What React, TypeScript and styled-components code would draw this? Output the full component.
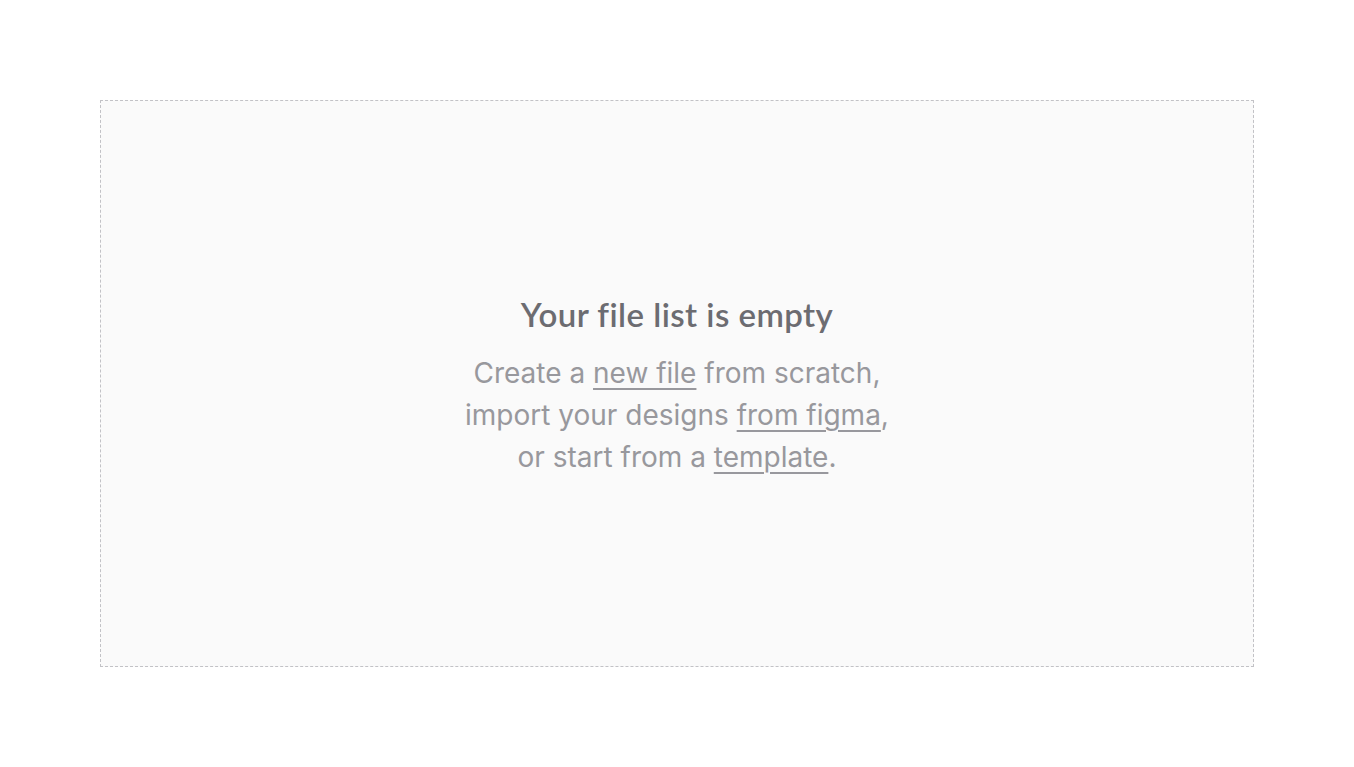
import React from "react";
import styled, { createGlobalStyle } from "styled-components";

const Global = createGlobalStyle`
  html, body { margin: 0; padding: 0; background: #ffffff; }
  body { font-family: Inter, "Liberation Sans", sans-serif; }
`;

const Page = styled.div`
  box-sizing: border-box;
  width: 1354px;
  height: 767px;
  padding: 100px;
  display: flex;
`;

const Dropzone = styled.section`
  box-sizing: border-box;
  flex: 1;
  height: 567px;
  padding-top: 4px;
  background: #fafafa;
  border: 1px dashed #c2c2c6;
  display: flex;
  flex-direction: column;
  align-items: center;
  justify-content: center;
  text-align: center;
`;

const Title = styled.h2`
  margin: 0 0 18px 0;
  font-family: Lato, "Noto Sans", sans-serif;
  font-weight: 600;
  font-size: 33px;
  line-height: 40px;
  color: #6c6c71;
  letter-spacing: 0.45px;
`;

const Body = styled.p`
  margin: 0;
  font-family: Inter, "Liberation Sans", sans-serif;
  font-weight: 400;
  font-size: 28px;
  line-height: 42px;
  color: #98989d;
`;

const Link = styled.a`
  color: inherit;
  text-decoration: underline;
  text-decoration-thickness: 2px;
  text-underline-offset: 5px;
  text-decoration-color: #98989d;
  cursor: pointer;
`;

export default function App() {
  return (
    <>
      <Global />
      <Page>
        <Dropzone>
          <Title>Your file list is empty</Title>
          <Body>
            Create a <Link>new file</Link> from scratch,
            <br />
            import your designs <Link>from figma</Link>,
            <br />
            or start from a <Link>template</Link>.
          </Body>
        </Dropzone>
      </Page>
    </>
  );
}
